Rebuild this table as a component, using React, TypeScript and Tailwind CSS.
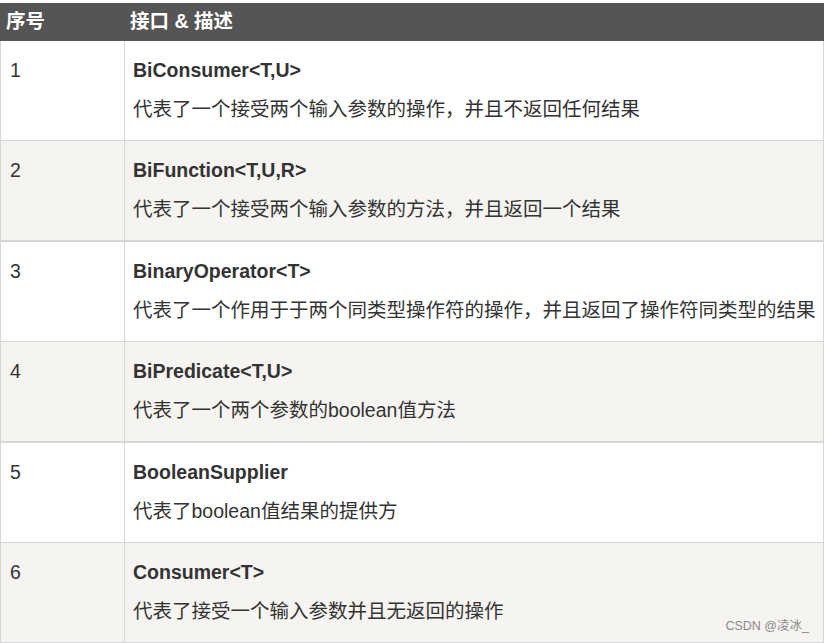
const rows = [
  { no: "1", name: "BiConsumer<T,U>", desc: "代表了一个接受两个输入参数的操作，并且不返回任何结果" },
  { no: "2", name: "BiFunction<T,U,R>", desc: "代表了一个接受两个输入参数的方法，并且返回一个结果" },
  { no: "3", name: "BinaryOperator<T>", desc: "代表了一个作用于于两个同类型操作符的操作，并且返回了操作符同类型的结果" },
  { no: "4", name: "BiPredicate<T,U>", desc: "代表了一个两个参数的boolean值方法" },
  { no: "5", name: "BooleanSupplier", desc: "代表了boolean值结果的提供方" },
  { no: "6", name: "Consumer<T>", desc: "代表了接受一个输入参数并且无返回的操作" },
];

export default function App() {
  return (
    <div
      className="relative w-[824px] h-[643px] overflow-hidden bg-white pt-[3px] text-[#333] text-[19.5px]"
      style={{ fontFamily: '"Liberation Sans", Arial, "Noto Sans CJK SC", sans-serif' }}
    >
      <div className="flex h-[38px] items-center bg-[#555555] font-bold text-white">
        <div className="w-[125px] pl-[6px]">序号</div>
        <div className="pl-[5px]">接口 &amp; 描述</div>
      </div>

      {rows.map((r, i) => {
        const even = i % 2 === 1;
        return (
          <div
            key={r.no}
            className={
              "flex border-l border-r border-[#d6d6d6] " +
              (even ? "h-[101px] bg-[#f5f4f0] border-b-2" : "h-[100px] bg-white border-b")
            }
          >
            <div className="w-[124px] shrink-0 border-r border-[#d6d6d6] pl-[9px] pt-[15px] leading-[29px]">
              {r.no}
            </div>
            <div className="pl-[8px] pt-[15px]">
              <div className="font-bold leading-[29px]">{r.name}</div>
              <div className="mt-[10px] whitespace-nowrap leading-[29px]">{r.desc}</div>
            </div>
          </div>
        );
      })}

      <div className="absolute right-[15px] bottom-[7px] text-[12.5px] text-[#8a8a8a]">CSDN @凌冰_</div>
    </div>
  );
}
